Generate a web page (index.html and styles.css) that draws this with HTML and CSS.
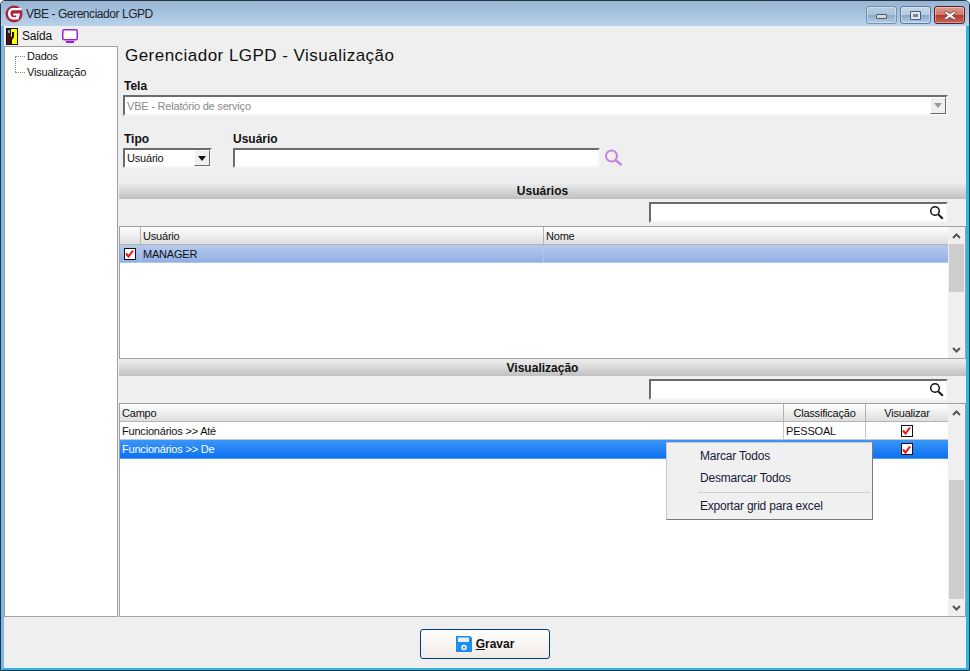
FILE: index.html
```html
<!DOCTYPE html>
<html lang="pt">
<head>
<meta charset="utf-8">
<title>VBE - Gerenciador LGPD</title>
<link rel="stylesheet" href="styles.css">
</head>
<body>
<div class="window">
  <header class="titlebar">
    <svg class="app-logo" width="18" height="18" viewBox="0 0 18 18"><circle cx="9" cy="9" r="8.500" fill="#a8243f"/><path d="M17 3H7.500C5 3 3 5.500 3 8.500 3 12 5 14.500 8 14.500h5.500L15 8.500H8.500L8 10.500h3.500l-.5 1.700H8.500C6.500 12.200 5.500 10.500 5.500 8.500 5.500 6.500 6.500 5.300 8 5.300h8z" fill="#fff"/></svg>
    <span class="title-text">VBE - Gerenciador LGPD</span>
    <div class="caption-buttons">
      <span class="cap cap-min"><i></i></span>
      <span class="cap cap-max"><i></i></span>
      <span class="cap cap-close"><svg width="14" height="11" viewBox="0 0 14 11"><path d="M2.500 1 7 3.500 11.500 1l1.500 1.500L9.500 5.500l3.500 3-1.500 1.500L7 7.500 2.500 10 1 8.500l3.500-3L1 2.500z" fill="#f4f4f4" stroke="#5a3a3a" stroke-width=".8"/></svg></span>
    </div>
  </header>
  <div class="inner">
    <nav class="toolbar">
      <svg width="12" height="17" viewBox="0 0 12 17"><rect width="12" height="17" fill="#111"/><rect x="5" y="1" width="6" height="15" fill="#ffff00"/><path d="M1 1h4v15H1z" fill="#5a0a12"/><path d="M6 4v4l-2 3v5h2v-4l2-3V4z" fill="#111"/><rect x="2" y="2" width="2" height="3" fill="#38c8d8"/></svg>
      <span class="tool-label">Saída</span>
      <svg class="tool-monitor" width="16" height="14" viewBox="0 0 16 14"><rect x=".75" y=".75" width="14.500" height="10" rx="1.500" fill="#fff" stroke="#9b20d8" stroke-width="1.500"/><rect x="4" y="12" width="8" height="2" fill="#9b20d8"/></svg>
    </nav>
    <div class="body">
      <aside class="tree">
        <div class="tree-item tree-first">Dados</div>
        <div class="tree-item tree-last">Visualização</div>
      </aside>
      <main class="content">
        <div class="form">
          <h1 class="heading">Gerenciador LGPD - Visualização</h1>
          <label class="label label-tela">Tela</label>
          <div class="field combo-disabled">
            <span>VBE - Relatório de serviço</span>
            <span class="combo-arrow arrow-disabled"></span>
          </div>
          <div class="filters">
            <div class="filter-tipo">
              <label class="label">Tipo</label>
              <div class="field combo-tipo"><span>Usuário</span><span class="combo-arrow arrow-dark"></span></div>
            </div>
            <div class="filter-user">
              <label class="label">Usuário</label>
              <div class="user-row">
                <div class="field input-user"></div>
                <svg width="19" height="18" viewBox="0 0 19 18"><circle cx="7.500" cy="7" r="5.500" fill="none" stroke="#c77fe8" stroke-width="2"/><path d="m11.500 11 6 5" stroke="#c77fe8" stroke-width="2.400"/></svg>
              </div>
            </div>
          </div>
        </div>

        <div class="section-bar">Usuários</div>
        <div class="search-row">
          <div class="field search">
            <svg width="15" height="15" viewBox="0 0 15 15"><circle cx="6" cy="6" r="4.300" fill="none" stroke="#111" stroke-width="1.500"/><path d="m9.300 9.500 4.500 4.200" stroke="#111" stroke-width="2"/></svg>
          </div>
        </div>
        <section class="grid grid-users">
          <div class="grid-main">
            <div class="row head cols-users">
              <div class="cell"></div><div class="cell">Usuário</div><div class="cell">Nome</div>
            </div>
            <div class="row row-soft cols-users">
              <div class="cell cell-center"><span class="check"><svg width="9" height="9" viewBox="0 0 9 9"><path d="M1 4.500 3.500 7.500 8 1.500" fill="none" stroke="#f01010" stroke-width="2"/></svg></span></div>
              <div class="cell">MANAGER</div><div class="cell"></div>
            </div>
          </div>
          <div class="scrollbar">
            <span class="sb-btn"><svg width="9" height="6" viewBox="0 0 9 6"><path d="M1 5 4.500 1.500 8 5" fill="none" stroke="#555" stroke-width="2"/></svg></span>
            <span class="sb-thumb thumb-users"></span>
            <span class="sb-track"></span>
            <span class="sb-btn"><svg width="9" height="6" viewBox="0 0 9 6"><path d="M1 1 4.500 4.500 8 1" fill="none" stroke="#555" stroke-width="2"/></svg></span>
          </div>
        </section>

        <div class="section-bar">Visualização</div>
        <div class="search-row">
          <div class="field search">
            <svg width="15" height="15" viewBox="0 0 15 15"><circle cx="6" cy="6" r="4.300" fill="none" stroke="#111" stroke-width="1.500"/><path d="m9.300 9.500 4.500 4.200" stroke="#111" stroke-width="2"/></svg>
          </div>
        </div>
        <section class="grid grid-view">
          <div class="grid-main">
            <div class="row head cols-view">
              <div class="cell">Campo</div><div class="cell cell-center">Classificação</div><div class="cell cell-center">Visualizar</div>
            </div>
            <div class="row row-plain cols-view">
              <div class="cell">Funcionários &gt;&gt; Até</div><div class="cell">PESSOAL</div>
              <div class="cell cell-center"><span class="check"><svg width="9" height="9" viewBox="0 0 9 9"><path d="M1 4.500 3.500 7.500 8 1.500" fill="none" stroke="#f01010" stroke-width="2"/></svg></span></div>
            </div>
            <div class="row row-active cols-view">
              <div class="cell">Funcionários &gt;&gt; De</div><div class="cell"></div>
              <div class="cell cell-center"><span class="check"><svg width="9" height="9" viewBox="0 0 9 9"><path d="M1 4.500 3.500 7.500 8 1.500" fill="none" stroke="#f01010" stroke-width="2"/></svg></span></div>
            </div>
          </div>
          <div class="scrollbar">
            <span class="sb-btn"><svg width="9" height="6" viewBox="0 0 9 6"><path d="M1 5 4.500 1.500 8 5" fill="none" stroke="#555" stroke-width="2"/></svg></span>
            <span class="sb-track"></span>
            <span class="sb-thumb thumb-view"></span>
            <span class="sb-btn"><svg width="9" height="6" viewBox="0 0 9 6"><path d="M1 1 4.500 4.500 8 1" fill="none" stroke="#555" stroke-width="2"/></svg></span>
          </div>
        </section>
      </main>
    </div>
    <footer class="footer">
      <button class="save" type="button">
        <svg width="16" height="16" viewBox="0 0 16 16"><path d="M0 0h14l2 2v14H0z" fill="#1e8cf0"/><rect x="2" y="1.500" width="11" height="4.500" fill="#e8eef4"/><rect x="4" y="9" width="8" height="7" fill="#1e8cf0"/><circle cx="8" cy="11.500" r="2" fill="none" stroke="#fff" stroke-width="1.500"/></svg>
        <span><u>G</u>ravar</span>
      </button>
    </footer>
  </div>
  <div class="menu">
    <div class="menu-item">Marcar Todos</div>
    <div class="menu-item">Desmarcar Todos</div>
    <div class="menu-sep"></div>
    <div class="menu-item">Exportar grid para excel</div>
  </div>
</div>
</body>
</html>
```

FILE: styles.css
```css
* { box-sizing: border-box; }
html, body { margin: 0; height: 100%; }
body { font-family: "Liberation Sans", Arial, sans-serif; font-size: 11px; letter-spacing: -.2px; color: #111; overflow: hidden; }

.window {
  position: relative; width: 970px; height: 671px; display: flex; flex-direction: column;
  background: #b9d1ea; border: 1px solid #26343f; border-radius: 5px 5px 0 0;
  overflow: hidden;
}
.titlebar {
  flex: 0 0 25px; display: flex; align-items: center; padding: 1px 4px 0 4px;
  background: linear-gradient(#97b4d2, #b9d2eb);
}
.app-logo { margin-right: 3px; }
.title-text { font-size: 12px; letter-spacing: -.45px; color: #1a2430; }
.caption-buttons { margin-left: auto; display: flex; gap: 3px; align-self: flex-start; margin-top: 4px; }
.cap {
  width: 31px; height: 18px; display: flex; align-items: center; justify-content: center;
  border: 1px solid #7590ad; border-radius: 3px;
  background: linear-gradient(#b5cce3 0, #a9c2dc 48%, #8eabc9 52%, #b4cde6 100%);
  box-shadow: inset 0 0 0 1px rgba(255,255,255,.35);
}
.cap-max { border-color: #5c7a99; background: linear-gradient(#c3d7eb 0, #b5cce3 48%, #8aa8c7 52%, #b4cde6 100%); }
.cap-close { border-color: #5a2027; background: linear-gradient(#dd9c92 0, #d0796d 48%, #b5392b 52%, #c8655a 100%); }
.cap-min i { display: block; width: 11px; height: 5px; margin-top: 3px; background: #d8d8d8; border: 1px solid #4a5d72; border-radius: 1px; }
.cap-max i { display: block; width: 11px; height: 9px; background: #6e86a1; border: 1px solid #4a5d72; border-radius: 1px; box-shadow: inset 0 0 0 2px #e8e8e8; }

.inner {
  flex: 1; min-height: 0; display: flex; flex-direction: column;
  background: #efefef;
  border-left: 3px solid #7ab8ea; border-right: 3px solid #2cb5e8; border-bottom: 2px solid #2cb5e8;
}
.toolbar { flex: 0 0 20px; display: flex; align-items: center; padding-left: 2px; gap: 4px; }
.tool-label { font-size: 12px; letter-spacing: -.3px; margin-right: 8px; width: 28px; }

.body { flex: 1; min-height: 0; display: flex; }
.tree {
  flex: 0 0 114px; background: #fff; border: 1px solid #a0a0a0;
  padding: 2px 0 0 22px; margin-right: 1px;
}
.tree-item { height: 16px; line-height: 14px; position: relative; }
.tree-item::before { content: ""; position: absolute; left: -12px; width: 10px; top: 7px; border-top: 1px dotted #888; }
.tree-first::after { content: ""; position: absolute; left: -12px; top: 7px; height: 16px; border-left: 1px dotted #888; }

.content { flex: 1; min-width: 0; display: flex; flex-direction: column; }
.form { flex: 0 0 136px; padding: 0 0 0 4px; }
.heading { margin: 0 0 0 2px; height: 33px; font-size: 17px; line-height: 20px; font-weight: 400; color: #111; letter-spacing: .47px; }
.label { display: block; font-weight: 700; font-size: 12px; line-height: 14px; letter-spacing: 0; color: #111; }
.label-tela { margin: 0 0 2px 1px; }
.field {
  background: #fff; border: 2px solid; border-color: #6b6b6b #f4f4f4 #f4f4f4 #6b6b6b;
  display: flex; align-items: center;
}
.combo-disabled { height: 21px; width: 825px; color: #8a8a8a; padding-left: 2px; justify-content: space-between; }
.combo-arrow { width: 16px; height: 17px; background: #efefef; border: 1px solid; border-color: #fff #6b6b6b #6b6b6b #fff; display: flex; align-items: center; justify-content: center; }
.combo-arrow::after { content: ""; border: 4px solid transparent; border-bottom: 0; border-top: 5px solid #111; }
.arrow-disabled::after { border-top-color: #9a9a9a; }
.filters { display: flex; margin-top: 16px; }
.filter-tipo { width: 110px; }
.filter-tipo .label { margin: 0 0 2px 1px; }
.filter-user .label { margin: 0 0 2px 0; }
.combo-tipo { width: 89px; height: 20px; padding-left: 2px; justify-content: space-between; }
.combo-tipo .combo-arrow { height: 16px; }
.user-row { display: flex; align-items: center; gap: 4px; }
.input-user { width: 367px; height: 20px; }

.section-bar {
  flex: 0 0 17px; min-height: 0; overflow: hidden; padding-top: 1px; text-align: center; font-weight: 700; font-size: 12px; line-height: 17px; letter-spacing: 0; color: #111;
  background: linear-gradient(#efefef, #c0c0c0);
}
.search-row { flex: 0 0 27px; display: flex; justify-content: flex-end; padding: 3px 18px 0 0; }
.search { width: 299px; height: 21px; justify-content: flex-end; padding-right: 2px; }

.grid { display: flex; background: #fff; border: 1px solid #a0a0a0; }
.grid-users { flex: 0 0 133px; }
.grid-view { flex: 1; min-height: 0; }
.grid-main { flex: 1; min-width: 0; display: flex; flex-direction: column; }
.row { display: grid; height: 18px; line-height: 18px; }
.cols-users { grid-template-columns: 21px 403px 1fr; }
.cols-view { grid-template-columns: 664px 82px 1fr; }
.cell { padding-left: 2px; border-right: 1px solid #c6c6c6; border-bottom: 1px solid #c6c6c6; white-space: nowrap; overflow: hidden; }
.cell:last-child { border-right: 0; }
.cell-center { padding-left: 0; text-align: center; display: flex; align-items: center; justify-content: center; }
.row:not(.head) .cell-center { padding-right: 1px; }
.head { background: linear-gradient(#ffffff, #dcdcdc); }
.head .cell { border-color: #b4b4b4; }
.row-soft { background: linear-gradient(#b6caec, #8faee6); }
.row-soft .cell { border-color: #b2c6e8; }
.row-active { background: linear-gradient(#3a96fa, #0a6ff0); color: #fff; height: 19px; }
.row-active .cell { border-color: #4b9cf4; }
.check { width: 12px; height: 12px; border: 1px solid #111; background: #fff; display: flex; align-items: center; justify-content: center; }
.scrollbar { flex: 0 0 17px; display: flex; flex-direction: column; background: #f0f0f0; padding: 0 1px 0 1px; }
.sb-btn { flex: 0 0 17px; display: flex; align-items: center; justify-content: center; background: #f0f0f0; }
.sb-thumb { background: #cdcdcd; }
.sb-track { flex: 1; background: #f0f0f0; }
.thumb-users { flex: 0 0 48px; }
.thumb-view { flex: 0 0 119px; }

.footer { flex: 0 0 51px; display: flex; justify-content: center; align-items: flex-start; padding-top: 12px; }
.save {
  width: 130px; height: 30px; display: flex; align-items: center; justify-content: center; gap: 4px;
  border: 1px solid #003b78; border-radius: 3px; background: linear-gradient(#ffffff, #f0eae6);
  font: 700 12px "Liberation Sans", Arial, sans-serif; color: #111; padding: 0;
}

.menu {
  position: absolute; left: 665px; top: 441px; width: 207px; height: 78px; padding-top: 2px;
  background: #f0f0f0; border: 1px solid #c8c8c8; border-right-color: #7a7a7a; border-bottom-color: #7a7a7a;
  font-size: 12px; letter-spacing: -.2px; color: #1a1a3a;
}
.menu-item { height: 22px; line-height: 23px; padding-left: 33px; }
.menu-sep { height: 1px; background: #d0d0d0; margin: 3px 2px 2px 31px; }
```
